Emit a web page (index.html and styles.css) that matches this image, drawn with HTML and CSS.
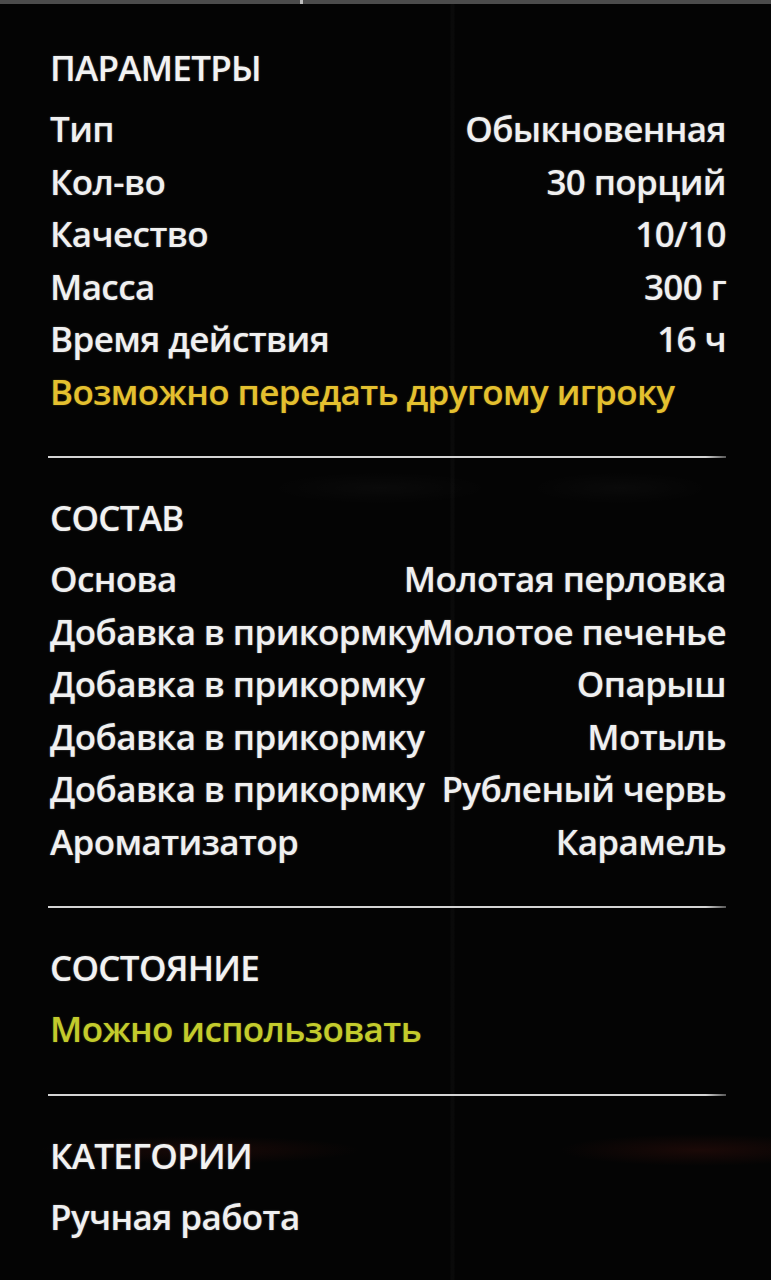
FILE: index.html
```html
<!DOCTYPE html>
<html lang="ru">
<head>
<meta charset="utf-8">
<title>Прикормка</title>
<link rel="stylesheet" href="styles.css">
</head>
<body>
<div class="topbar"></div>
<main class="panel">
  <section class="group">
    <h2 class="group-title">ПАРАМЕТРЫ</h2>
    <div class="row"><span>Тип</span><span>Обыкновенная</span></div>
    <div class="row"><span>Кол-во</span><span>30 порций</span></div>
    <div class="row"><span>Качество</span><span>10/10</span></div>
    <div class="row"><span>Масса</span><span>300 г</span></div>
    <div class="row"><span>Время действия</span><span>16 ч</span></div>
    <div class="row note-gold"><span>Возможно передать другому игроку</span></div>
  </section>
  <hr class="divider">
  <section class="group">
    <h2 class="group-title">СОСТАВ</h2>
    <div class="row"><span>Основа</span><span>Молотая перловка</span></div>
    <div class="row"><span>Добавка в прикормку</span><span>Молотое печенье</span></div>
    <div class="row"><span>Добавка в прикормку</span><span>Опарыш</span></div>
    <div class="row"><span>Добавка в прикормку</span><span>Мотыль</span></div>
    <div class="row"><span>Добавка в прикормку</span><span>Рубленый червь</span></div>
    <div class="row"><span>Ароматизатор</span><span>Карамель</span></div>
  </section>
  <hr class="divider">
  <section class="group">
    <h2 class="group-title">СОСТОЯНИЕ</h2>
    <div class="row note-green"><span>Можно использовать</span></div>
  </section>
  <hr class="divider">
  <section class="group">
    <h2 class="group-title">КАТЕГОРИИ</h2>
    <div class="row"><span>Ручная работа</span></div>
  </section>
</main>
</body>
</html>
```

FILE: styles.css
```css
html, body {
  margin: 0;
  padding: 0;
}

body {
  width: 771px;
  height: 1280px;
  overflow: hidden;
  background-color: #040404;
  background-image:
    linear-gradient(90deg, transparent 450px, rgba(255,255,255,0.025) 451px, rgba(255,255,255,0.025) 454px, transparent 455px),
    radial-gradient(ellipse 110px 16px at 380px 488px, rgba(255,255,255,0.025), transparent),
    radial-gradient(ellipse 90px 16px at 620px 488px, rgba(255,255,255,0.022), transparent),
    radial-gradient(ellipse 160px 14px at 200px 1150px, rgba(120,30,20,0.18), transparent),
    radial-gradient(ellipse 140px 16px at 700px 1150px, rgba(120,30,20,0.2), transparent);
  font-family: "Open Sans", "Noto Sans", "DejaVu Sans", sans-serif;
  color: #f0f0f0;
}

.topbar {
  height: 4px;
  background: linear-gradient(90deg, #4c4c4c 0, #4c4c4c 300px, #bdbdbd 300px, #bdbdbd 303px, #4c4c4c 303px, #4c4c4c 100%);
}

.panel {
  padding: 41px 45px 0 50px;
}

.group {
  display: flex;
  flex-direction: column;
}

.group-title {
  margin: 0 0 12px;
  font-size: 35px;
  font-weight: 600;
  line-height: 46px;
  letter-spacing: -0.7px;
  color: #f2f2f2;
  text-shadow: 0 0 2px rgba(255,255,255,0.35);
}

.row {
  display: flex;
  justify-content: space-between;
  font-size: 35px;
  font-weight: 600;
  line-height: 52.5px;
  letter-spacing: -0.6px;
  white-space: nowrap;
  text-shadow: 0 0 2px rgba(255,255,255,0.35);
}

.row > span:first-child {
  min-width: 0;
  flex-shrink: 1;
}

.row > span:last-child:not(:first-child) {
  flex-shrink: 0;
}

.note-gold {
  color: #e4c02f;
  text-shadow: 0 0 2px rgba(228,192,47,0.35);
}

.note-green {
  color: #c3cb2c;
  text-shadow: 0 0 2px rgba(195,203,44,0.35);
}

.divider {
  margin: 38px 0 37px -2px;
  height: 2px;
  border: 0;
  background: linear-gradient(90deg, #d4d4d4 0, #d4d4d4 97%, rgba(212,212,212,0.4) 100%);
}
```
